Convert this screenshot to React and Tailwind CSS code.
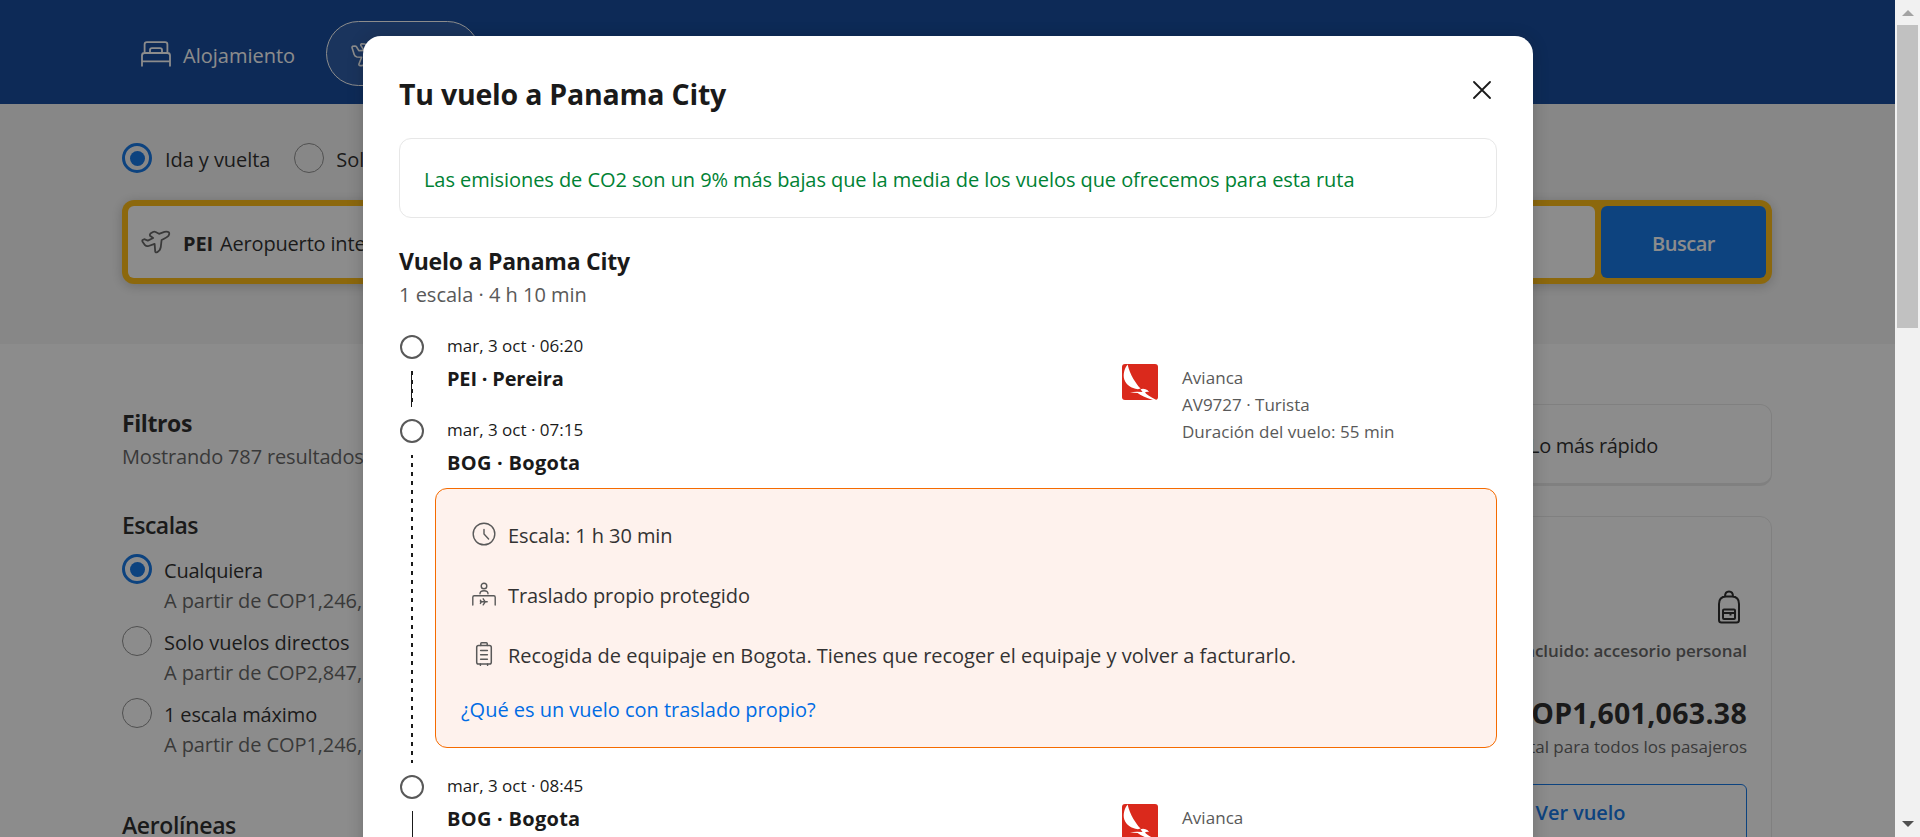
const TakeoffIcon = ({ className }) => (
  <svg viewBox="0 0 30 24" fill="none" stroke="currentColor" strokeWidth="1.8" strokeLinejoin="round" strokeLinecap="round" className={className}>
    <path d="M1.600 10 L3.200 9.200 L6.800 10.600 L12.200 8 L9 5.800 Q8.400 4.800 9.400 3.600 L12 2 Q13.200 1.400 14.600 2 L18 3.800 L23.400 1.800 Q26.600 1.200 28 2.400 Q28.800 4 27.600 5.600 Q26 7.400 20.600 10 L19.800 17 Q19.400 18.800 18.400 20.400 L16.200 22.200 Q14.600 22.800 14.200 21.400 L13.600 13.800 L7.600 16 Q5.400 16.600 4 15.200 L1.400 11.400 Q1.100 10.500 1.600 10 Z" />
  </svg>
);

const FlightIcon = ({ className }) => (
  <svg viewBox="0 0 30 24" fill="none" stroke="currentColor" strokeWidth="1.6" strokeLinejoin="round" strokeLinecap="round" className={className}>
    <path d="M1.400 3.400 L4 3 Q5 3 5.600 4 L7.800 7.600 L13 7.400 L9.800 2.400 Q9.400 1 10.800 .8 L13.600 1 Q14.600 1.200 15.400 2 L20 7.400 L25.600 7.800 Q29 9 29 10.700 Q28.600 13 25 13.400 L19.500 13.800 L13 21.600 Q12.200 22.600 11 22.600 L9 22.600 Q7.600 22.400 8 21 L10.600 14.200 L6 14 Q3.800 13.600 3.200 11.600 L1 4.400 Q1 3.600 1.400 3.400 Z" />
  </svg>
);

const BedIcon = () => (
  <svg viewBox="0 0 30 26" className="h-[26px] w-[30px]" fill="none" stroke="white" strokeWidth="1.8" strokeLinecap="round">
    <path d="M1 24.800V14.500Q1 12 3.500 12H26.500Q29 12 29 14.500V24.800M1 20.300H29M3.600 12V3.500Q3.600 1.200 6 1.200H24Q26.400 1.200 26.400 3.500V12M9 12V9Q9 7.200 11 7.200H19Q21 7.200 21 9V12" />
  </svg>
);

const ClockIcon = () => (
  <svg viewBox="0 0 24 24" className="size-6" fill="none" stroke="#595959" strokeWidth="1.4" strokeLinecap="round">
    <circle cx="12" cy="12" r="10.8" />
    <path d="M12 7.500V12L16.600 17" />
  </svg>
);

const DeskIcon = () => (
  <svg viewBox="0 0 24 24" className="size-6" fill="none" stroke="#595959" strokeWidth="1.4" strokeLinecap="round" strokeLinejoin="round">
    <circle cx="12" cy="4" r="2.8" />
    <path d="M8 11.800C8 9.600 9.600 8.700 12 8.700S16 9.600 16 11.800M.8 23V15.200Q.8 13.800 2.200 13.800H21.800Q23.200 13.800 23.200 15.200V23M8.400 19.800H15.200M11.200 16.800L13.200 19.800L11.200 22.800M8.400 18.200L9.400 19.800L8.400 21.400" />
  </svg>
);

const SuitcaseIcon = () => (
  <svg viewBox="0 0 24 24" className="size-6" fill="none" stroke="#595959" strokeWidth="1.5" strokeLinecap="round" strokeLinejoin="round">
    <rect x="4.7" y="3.6" width="14.6" height="18.4" rx="1.8" />
    <path d="M8.800 3.600V1.600Q8.800 .8 9.600 .8H14.400Q15.200 .8 15.200 1.600V3.600M8.600 8.400H15.400M8.600 12.800H15.400M8.600 17.200H15.400M8.400 22V23.300M15.600 22V23.300" />
  </svg>
);

const BackpackIcon = () => (
  <svg viewBox="0 0 24 34" className="h-[34px] w-6" fill="none" stroke="#1a1a1a" strokeWidth="2" strokeLinejoin="round">
    <path d="M2 14Q2 6.500 9 6.500H15Q22 6.500 22 14V30Q22 32.500 19.500 32.500H4.500Q2 32.500 2 30ZM8 6.500Q8 1.500 12 1.500T16 6.500" />
    <rect x="6" y="19.5" width="12" height="9.5" rx="1" />
    <path d="M6 23H18M13.500 23V25.500" />
  </svg>
);

const AviancaLogo = () => (
  <svg viewBox="0 0 36 36" className="size-9 shrink-0 rounded-[3px]">
    <rect width="36" height="36" fill="#da291c" />
    <path d="M5.600 .4C2 5 1 10.500 2.300 15.500C4.300 21 9 24.300 16 25.200L18.600 24.600C14 19.500 8 11 5.600 .4Z" fill="#fff" />
    <path d="M18.500 25.200Q21 24.400 23.500 25.200Q26 25.600 27 28Q24 27.600 23 28.400Q25 31 34.500 36H31Q20 32.600 15.600 29Q12 28.600 8 28.200Q14 27.400 20.500 28Z" fill="#fff" />
  </svg>
);

const Radio = ({ on }) =>
  on ? (
    <span className="flex size-[30px] shrink-0 items-center justify-center rounded-full border-[3px] border-[#006ce4]">
      <span className="size-[15px] rounded-full bg-[#006ce4]" />
    </span>
  ) : (
    <span className="size-[30px] shrink-0 rounded-full border border-[#868686]" />
  );

const Option = ({ on, label, price, tracking }) => (
  <div className="flex h-[72px] gap-3">
    <Radio on={on} />
    <div className="flex flex-col text-[20px] leading-[30px] whitespace-nowrap">
      <span className={`mt-[2px] text-[#1a1a1a] ${tracking}`}>{label}</span>
      <span className="tracking-[-0.09px] text-[#595959]">{price}</span>
    </div>
  </div>
);

const Stop = ({ date, place, tracking }) => (
  <div className="flex flex-col items-start pl-3 whitespace-nowrap text-[#1a1a1a]">
    <span className="text-[17px] leading-[27px]">{date}</span>
    <span className={`mt-[5px] text-[20px] leading-[30px] font-bold ${tracking}`}>{place}</span>
  </div>
);

const Rail = ({ children }) => (
  <div className="mt-[3px] flex w-[26px] shrink-0 flex-col items-center">
    <span className="size-6 shrink-0 rounded-full border-2 border-[#595959]" />
    {children}
  </div>
);

const Flight = ({ children }) => (
  <div className="mt-8 flex w-[375px] gap-6">
    <AviancaLogo />
    <div className="flex flex-col items-start text-[17px] leading-[27px] whitespace-nowrap text-[#595959]">
      <span className="tracking-[0.05px]">Avianca</span>
      {children}
    </div>
  </div>
);

const Note = ({ icon, children }) => (
  <div className="mb-[30px] flex h-[30px] gap-3 pl-3">
    <span className="mt-[2px]">{icon}</span>
    <span className="mt-px">{children}</span>
  </div>
);

export default function App() {
  return (
    <div className="flex h-[837px] w-[1920px] overflow-hidden bg-white font-['Open_Sans',sans-serif]">
      <div className="relative w-[1895px] shrink-0 overflow-hidden">
        <header className="flex h-[104px] items-start bg-[#003b95] pl-[141px]">
          <div className="mt-[41px] flex gap-3">
            <BedIcon />
            <span className="text-[20px] leading-[30px] text-white">Alojamiento</span>
          </div>
          <div className="mt-[21px] ml-[31px] flex h-[65px] w-[154px] gap-3 rounded-full border border-white bg-white/10 pt-[21px] pl-6 text-[20px] leading-[30px] text-white">
            <FlightIcon className="h-6 w-[30px]" />
            Vuelos
          </div>
        </header>

        <section className="h-[240px] bg-[#f5f5f5] px-[122px] pt-[39px]">
          <div className="flex h-[30px] gap-3 text-[20px] leading-[30px] text-[#1a1a1a]">
            <Radio on />
            <span className="mt-[2px] mr-3 ml-px tracking-[-0.07px]">Ida y vuelta</span>
            <Radio />
            <span className="mt-[2px]">Solo ida</span>
          </div>
          <div className="mt-[27px] flex h-[84px] w-[1650px] gap-[6px] rounded-xl bg-[#ffb700] p-[6px] shadow-[0_2px_12px_rgba(26,26,26,0.24)]">
            <div className="flex flex-1 items-start rounded-md bg-white pt-[23px] pl-[13px] text-[20px] leading-[30px] text-[#1a1a1a]">
              <TakeoffIcon className="mt-px mr-3 h-6 w-[30px] text-[#595959]" />
              <span className="mr-[7px] font-bold tracking-[-0.13px]">PEI</span>
              <span className="tracking-[-0.17px]">Aeropuerto internacional Matecaña</span>
            </div>
            <div className="flex w-[165px] items-center justify-center rounded-md bg-[#006ce4] pt-[3px] text-[20px] leading-[30px] font-semibold tracking-[-0.47px] text-white">
              Buscar
            </div>
          </div>
        </section>

        <main className="flex h-[493px] w-[1772px] justify-between pl-[122px]">
          <aside className="w-[375px] pt-[61px]">
            <h2 className="text-[23px] leading-9 font-bold tracking-[-0.4px] text-[#1a1a1a]">Filtros</h2>
            <p className="mt-px text-[20px] leading-[30px] tracking-[-0.16px] whitespace-nowrap text-[#595959]">Mostrando 787 resultados</p>
            <h3 className="mt-[35px] text-[23px] leading-9 font-semibold tracking-[-0.54px] text-[#1a1a1a]">Escalas</h3>
            <div className="mt-[11px]">
              <Option on label="Cualquiera" tracking="tracking-[-0.22px]" price="A partir de COP1,246," />
              <Option label="Solo vuelos directos" tracking="tracking-[0px]" price="A partir de COP2,847," />
              <Option label="1 escala máximo" tracking="tracking-[-0.14px]" price="A partir de COP1,246," />
            </div>
            <h3 className="mt-[37px] text-[23px] leading-9 font-semibold tracking-[-0.37px] text-[#1a1a1a]">Aerolíneas</h3>
          </aside>
          <div className="w-[400px] pt-[60px]">
            <div className="h-[82px] rounded-xl border border-b-[3px] border-[#e7e7e7] pt-[26px] pl-[156px] text-[20px] leading-[30px] tracking-[-0.3px] text-[#1a1a1a]">
              Lo más rápido
            </div>
            <div className="mt-[30px] flex h-[400px] flex-col items-end rounded-xl border border-[#e7e7e7] pt-[73px] pr-[24px] whitespace-nowrap">
              <span className="mr-[6px]"><BackpackIcon /></span>
              <span className="mt-[13px] text-[17px] leading-[27px] font-semibold tracking-[-0.02px] text-[#595959]">Incluido: accesorio personal</span>
              <span className="mt-[28px] text-[28.5px] leading-[42px] font-bold tracking-[0.3px] text-[#1a1a1a]">COP1,601,063.38</span>
              <span className="-mt-px text-[17px] leading-[27px] text-[#595959]">Total para todos los pasajeros</span>
              <div className="mt-[24px] flex h-[60px] w-[333px] justify-center rounded-md border border-[#006ce4] pt-[13px] text-[20px] leading-[30px] font-semibold tracking-[-0.06px] text-[#006ce4]">
                Ver vuelo
              </div>
            </div>
          </div>
        </main>

        <div className="absolute inset-0 bg-[#1a1a1a]/50" />

        <div role="dialog" className="absolute top-9 left-[363px] h-[900px] w-[1170px] rounded-[18px] bg-white px-9 pt-[37px] shadow-[0_2px_16px_rgba(26,26,26,0.24)]">
          <div className="flex items-start justify-between">
            <h1 className="text-[28.5px] leading-[42px] font-bold tracking-[-0.22px] text-[#1a1a1a]">Tu vuelo a Panama City</h1>
            <svg viewBox="0 0 18 18" className="mt-2 mr-[6px] size-[18px]" stroke="#1a1a1a" strokeWidth="1.8" strokeLinecap="round">
              <path d="M1 1L17 17M17 1L1 17" />
            </svg>
          </div>
          <div className="mt-[23px] h-20 rounded-xl border border-[#e7e7e7] pt-[26px] pl-[24px] text-[20px] leading-[30px] tracking-[-0.07px] text-[#008234]">
            Las emisiones de CO2 son un 9% más bajas que la media de los vuelos que ofrecemos para esta ruta
          </div>
          <h2 className="mt-[25px] text-[23px] leading-9 font-bold tracking-[-0.23px] text-[#1a1a1a]">Vuelo a Panama City</h2>
          <p className="mt-px text-[20px] leading-[30px] text-[#595959]">1 escala · 4 h 10 min</p>

          <div className="mt-[22px] flex h-[84px]">
            <Rail>
              <span className="mt-3 h-9 w-[2px] border-l border-[#1a1a1a] bg-[repeating-linear-gradient(#1a1a1a_0_4px,transparent_4px_9px)]" />
            </Rail>
            <div className="flex-1 pl-[10px]">
              <Stop date="mar, 3 oct · 06:20" place="PEI · Pereira" tracking="tracking-[-0.19px]" />
            </div>
            <Flight>
              <span>AV9727 · Turista</span>
              <span className="tracking-[0.04px]">Duración del vuelo: 55 min</span>
            </Flight>
          </div>
          <div className="flex h-[356px]">
            <Rail>
              <span className="mt-3 h-[308px] w-[2px] bg-[repeating-linear-gradient(#1a1a1a_0_3px,transparent_3px_8px,#1a1a1a_8px_9px)]" />
            </Rail>
            <div className="flex-1 pl-[10px]">
              <Stop date="mar, 3 oct · 07:15" place="BOG · Bogota" tracking="tracking-[0.27px]" />
              <div className="mt-[10px] flex h-[260px] flex-col items-start rounded-xl border border-[#f56b00] bg-[#fef2ed] pt-[31px] pl-6 text-[20px] leading-[30px] whitespace-nowrap text-[#333]">
                <Note icon={<ClockIcon />}><span className="tracking-[-0.08px]">Escala: 1 h 30 min</span></Note>
                <Note icon={<DeskIcon />}><span className="tracking-[-0.06px]">Traslado propio protegido</span></Note>
                <Note icon={<SuitcaseIcon />}><span className="tracking-[-0.01px]">Recogida de equipaje en Bogota. Tienes que recoger el equipaje y volver a facturarlo.</span></Note>
                <a className="-mt-[5px] ml-px tracking-[-0.02px] text-[#006ce4]">¿Qué es un vuelo con traslado propio?</a>
              </div>
            </div>
          </div>
          <div className="flex h-[84px]">
            <Rail>
              <span className="mt-3 h-9 w-px bg-[#1a1a1a]" />
            </Rail>
            <div className="flex-1 pl-[10px]">
              <Stop date="mar, 3 oct · 08:45" place="BOG · Bogota" tracking="tracking-[0.27px]" />
            </div>
            <Flight />
          </div>
        </div>
      </div>

      <div className="flex w-[25px] flex-col items-center bg-[#f1f1f1]">
        <svg viewBox="0 0 12 6" className="mt-[10px] h-[6px] w-3" fill="#a3a3a3"><path d="M0 6L6 0L12 6Z" /></svg>
        <div className="mt-[9px] h-[303px] w-[21px] bg-[#c1c1c1]" />
        <svg viewBox="0 0 12 6" className="mt-auto mb-[10px] h-[6px] w-3" fill="#505050"><path d="M0 0L6 6L12 0Z" /></svg>
      </div>
    </div>
  );
}
